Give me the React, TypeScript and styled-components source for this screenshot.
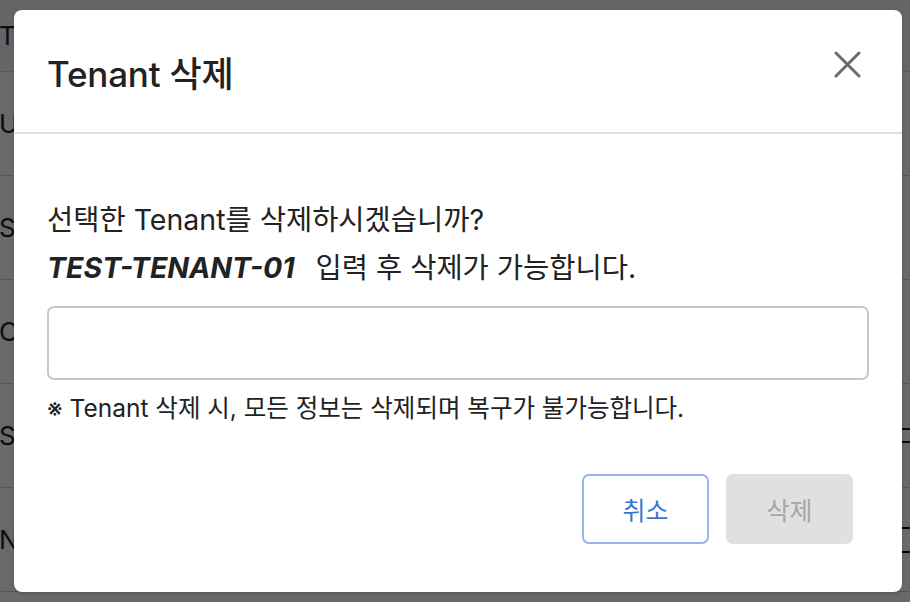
import React from "react";
import styled, { createGlobalStyle } from "styled-components";

const Global = createGlobalStyle`
  html, body { margin: 0; padding: 0; }
  body {
    width: 910px; height: 602px; overflow: hidden;
    font-family: Inter, "Noto Sans CJK KR", "Noto Sans", sans-serif;
    background: #fff;
  }
`;

const Page = styled.div`
  position: relative;
  width: 910px;
  height: 602px;
  overflow: hidden;
`;

const Table = styled.div`
  display: flex;
  flex-direction: column;
  width: 910px;
`;

const HeadRow = styled.div`
  height: 71px;
  border-bottom: 1px solid #d8d8d8;
  background: #f4f6fa;
  display: flex;
  align-items: center;
  justify-content: space-between;
  font-size: 26px;
  color: #222;
`;

const Row = styled.div`
  height: 103px;
  border-bottom: 1px solid #d0d0d0;
  display: flex;
  align-items: center;
  justify-content: space-between;
  font-size: 26px;
  color: #222;
`;

const Cell = styled.span`
  margin-left: -1px;
`;

const RightLines = styled.span`
  width: 20px;
  height: 11px;
  border-top: 2px solid #1a1a1a;
  border-bottom: 2px solid #1a1a1a;
  margin-right: -12px;
`;

const RightBox = styled.span`
  width: 14px;
  height: 22px;
  border: 2px solid #111;
  margin-right: -8px;
`;

const Overlay = styled.div`
  position: absolute;
  inset: 0;
  background: rgba(0, 0, 0, 0.59);
`;

const Modal = styled.div`
  position: absolute;
  left: 14px;
  top: 10px;
  width: 888px;
  height: 582px;
  background: #fff;
  border-radius: 8px;
  display: flex;
  flex-direction: column;
  box-shadow: 0 2px 3px rgba(0, 0, 0, 0.15);
`;

const Header = styled.div`
  height: 122px;
  border-bottom: 2px solid #dedede;
  display: flex;
  align-items: center;
  justify-content: space-between;
  padding: 0 40px 0 33px;
`;

const Title = styled.h2`
  margin: 0;
  font-size: 35px;
  font-weight: 500;
  color: #222;
  letter-spacing: -0.2px;
`;

const CloseBtn = styled.button`
  border: none;
  background: none;
  padding: 0;
  width: 30px;
  height: 30px;
  display: flex;
  align-items: center;
  justify-content: center;
  cursor: pointer;
  margin-bottom: 14px;
`;

const Body = styled.div`
  padding: 62px 33px 0 33px;
  display: flex;
  flex-direction: column;
`;

const Message = styled.p`
  margin: 0;
  font-size: 28.5px;
  line-height: 48px;
  color: #222;
  white-space: nowrap;
`;

const Strong = styled.b`
  font-style: italic;
  font-weight: 700;
  margin-right: 21px;
`;

const Input = styled.input`
  margin-top: 14px;
  height: 74px;
  box-sizing: border-box;
  border: 2px solid #c8c8c8;
  border-radius: 7px;
  font-size: 24px;
  padding: 0 16px;
  outline: none;
`;

const Note = styled.p`
  margin: 11px 0 0 0;
  font-size: 24.5px;
  color: #222;
  line-height: 34px;
  white-space: nowrap;
`;

const Footer = styled.div`
  display: flex;
  justify-content: flex-end;
  gap: 17px;
  padding: 49px 49px 0 0;
`;

const Button = styled.button<{ $variant: "outline" | "disabled" }>`
  width: 127px;
  height: 70px;
  border-radius: 7px;
  font-size: 25px;
  font-family: inherit;
  box-sizing: border-box;
  border: ${(p) => (p.$variant === "outline" ? "2px solid #94b6ea" : "none")};
  background: ${(p) => (p.$variant === "outline" ? "#fff" : "#e0e0e0")};
  color: ${(p) => (p.$variant === "outline" ? "#3b76cf" : "#a6a6a6")};
`;

export default function App() {
  return (
    <Page>
      <Global />
      <Table>
        <HeadRow><Cell>TI</Cell><span /></HeadRow>
        <Row><Cell>UY</Cell><span /></Row>
        <Row><Cell>Sa</Cell><span /></Row>
        <Row><Cell>Co</Cell><span /></Row>
        <Row><Cell>SI</Cell><RightLines /></Row>
        <Row><Cell>N</Cell><RightBox /></Row>
      </Table>
      <Overlay />
      <Modal>
        <Header>
          <Title>Tenant 삭제</Title>
          <CloseBtn aria-label="close">
            <svg width="27" height="27" viewBox="0 0 27 27">
              <path d="M2 2 L25 25 M25 2 L2 25" stroke="#6b6b6b" strokeWidth="3" strokeLinecap="round" />
            </svg>
          </CloseBtn>
        </Header>
        <Body>
          <Message>선택한 Tenant를 삭제하시겠습니까?</Message>
          <Message><Strong>TEST-TENANT-01</Strong>입력 후 삭제가 가능합니다.</Message>
          <Input />
          <Note>※ Tenant 삭제 시, 모든 정보는 삭제되며 복구가 불가능합니다.</Note>
        </Body>
        <Footer>
          <Button $variant="outline">취소</Button>
          <Button $variant="disabled" disabled>삭제</Button>
        </Footer>
      </Modal>
    </Page>
  );
}
